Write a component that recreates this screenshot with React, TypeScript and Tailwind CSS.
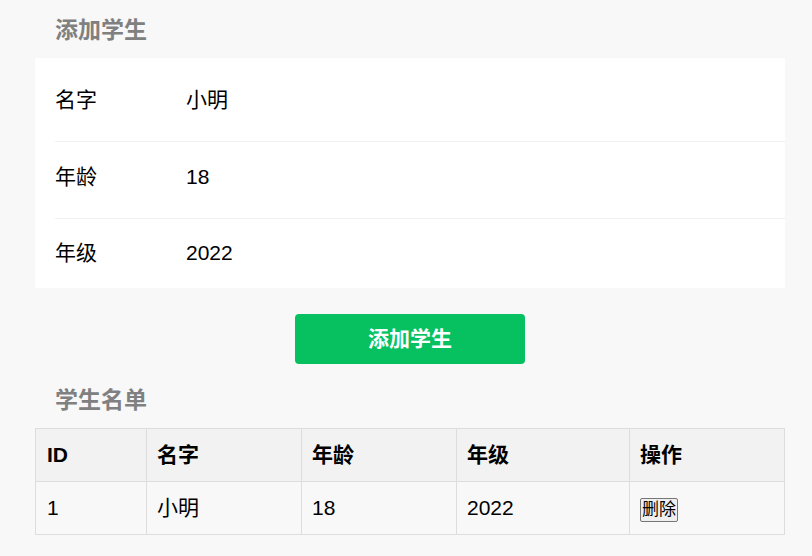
import React from "react";

const font = { fontFamily: '"Liberation Sans", "Noto Sans CJK SC", sans-serif' };

const fields = [
  { label: "名字", value: "小明", cls: "h-[83px] pt-[30px]" },
  { label: "年龄", value: "18", cls: "h-[77px] pt-[23px] border-t border-[#f0f0f0]" },
  { label: "年级", value: "2022", cls: "h-[70px] pt-[22px] border-t border-[#f0f0f0]" },
];

const App = () => {
  return (
    <div className="min-h-screen bg-[#f8f8f8] pl-[35px] pr-[27px] pt-[15px] text-black" style={font}>
      {/* Form */}
      <h2 className="pl-5 text-[23px] leading-[30px] font-bold text-[#808080] mb-[13px]">添加学生</h2>
      <div className="bg-white pl-5">
        {fields.map((f) => (
          <div key={f.label} className={`flex text-[21px] leading-[24px] ${f.cls}`}>
            <span className="w-[131px]">{f.label}</span>
            <span>{f.value}</span>
          </div>
        ))}
      </div>

      <div className="flex justify-center mt-[26px]">
        <button className="w-[230px] h-[50px] rounded-[4px] bg-[#07c160] text-white text-[21px] font-bold">
          添加学生
        </button>
      </div>

      {/* List */}
      <h2 className="pl-5 mt-[21px] mb-[13px] text-[23px] leading-[30px] font-bold text-[#808080]">学生名单</h2>
      <table className="w-[750px] border-collapse text-[21px] text-left">
        <thead>
          <tr className="bg-[#f2f2f2] h-[53px]">
            <th className="w-[111px] border border-[#dddddd] pl-[11px] font-bold">ID</th>
            <th className="w-[155px] border border-[#dddddd] pl-[10px] font-bold">名字</th>
            <th className="w-[155px] border border-[#dddddd] pl-[10px] font-bold">年龄</th>
            <th className="w-[173px] border border-[#dddddd] pl-[10px] font-bold">年级</th>
            <th className="border border-[#dddddd] pl-[10px] font-bold">操作</th>
          </tr>
        </thead>
        <tbody>
          <tr className="h-[53px]">
            <td className="border border-[#dddddd] pl-[11px]">1</td>
            <td className="border border-[#dddddd] pl-[10px]">小明</td>
            <td className="border border-[#dddddd] pl-[10px]">18</td>
            <td className="border border-[#dddddd] pl-[10px]">2022</td>
            <td className="border border-[#dddddd] pl-[10px]">
              <button className="text-[17px] leading-[20px] px-[1px] py-[1px] bg-[#efefef] border border-[#767676] rounded-[2px]">
                删除
              </button>
            </td>
          </tr>
        </tbody>
      </table>
    </div>
  );
};

export default App;
